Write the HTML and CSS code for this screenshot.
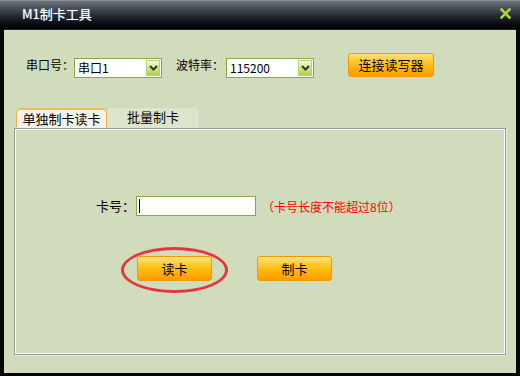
FILE: index.html
```html
<!DOCTYPE html>
<html lang="zh">
<head>
<meta charset="utf-8">
<title>M1制卡工具</title>
<link rel="stylesheet" href="styles.css">
</head>
<body>
<div class="window">
  <div class="titlebar">
    <span class="title">M1制卡工具</span>
    <svg class="close" width="11" height="11" viewBox="0 0 11 11"><path d="M1.5 1.5 L9.5 9.5 M9.5 1.5 L1.5 9.5" stroke="#a6d83a" stroke-width="2.6" stroke-linecap="square"/></svg>
  </div>
  <div class="content">
    <div class="toprow">
      <span class="lbl lbl1">串口号：</span>
      <div class="combo"><span class="combo-text">串口1</span><span class="arrow"><svg width="9" height="6" viewBox="0 0 9 6"><path d="M1 1 L4.5 4.5 L8 1" fill="none" stroke="#333" stroke-width="2"/></svg></span></div>
      <span class="lbl lbl2">波特率：</span>
      <div class="combo"><span class="combo-text">115200</span><span class="arrow"><svg width="9" height="6" viewBox="0 0 9 6"><path d="M1 1 L4.5 4.5 L8 1" fill="none" stroke="#333" stroke-width="2"/></svg></span></div>
      <button class="obtn connect">连接读写器</button>
    </div>
    <div class="tabs">
      <div class="tab active">单独制卡读卡</div>
      <div class="tab">批量制卡</div>
    </div>
    <div class="panel">
      <div class="cardrow">
        <span class="lbl lbl3">卡号：</span>
        <div class="input"><span class="caret"></span></div>
        <span class="hint">（卡号长度不能超过8位）</span>
      </div>
      <div class="btnrow">
        <div class="btnwrap">
          <button class="obtn small">读卡</button>
          <span class="ring"></span>
        </div>
        <button class="obtn small">制卡</button>
      </div>
    </div>
  </div>
</div>
</body>
</html>
```
FILE: styles.css
```css
html, body {
  margin: 0;
  padding: 0;
  background: #000;
}
body {
  font-family: "Noto Sans CJK SC", "Liberation Sans", sans-serif;
  font-size: 12px;
  color: #000;
}
.window {
  width: 520px;
  height: 376px;
  display: flex;
  flex-direction: column;
  background: #050608;
  box-sizing: border-box;
  overflow: hidden;
}
.titlebar {
  height: 29px;
  flex: none;
  display: flex;
  align-items: center;
  justify-content: space-between;
  padding: 0 9px 0 22px;
  box-sizing: border-box;
  border-top: 1px solid #8a9098;
  background: linear-gradient(#6c7279 0%, #4a5058 25%, #23282e 55%, #0a0d11 80%, #000 100%);
}
.title {
  color: #fff;
  font-size: 13px;
  line-height: 16px;
  margin-top: -2px;
  text-shadow: 0 0 1px #8cc0ff;
}
.close {
  display: block;
  margin-top: -3px;
}
.content {
  flex: 1;
  margin: 0 4px 3px 4px;
  background: #d0dcbc;
  padding: 23px 0 0 0;
  box-sizing: border-box;
  display: flex;
  flex-direction: column;
  border-top: 1px solid #1e2226;
}
.toprow {
  display: flex;
  align-items: center;
  height: 24px;
  padding-left: 22px;
}
.lbl {
  white-space: nowrap;
  line-height: 20px;
}
.lbl1 { width: 48px; }
.lbl2 { width: 50px; margin-left: 14px; }
.combo {
  width: 88px;
  height: 20px;
  box-sizing: border-box;
  border: 1px solid #88aa40;
  background: #fff;
  display: flex;
  align-items: center;
  justify-content: space-between;
  margin-top: 5px;
}
.combo-text {
  padding-left: 3px;
  line-height: 18px;
}
.arrow {
  width: 14px;
  height: 16px;
  margin-right: 1px;
  box-sizing: border-box;
  border: 1px solid #b8d080;
  background: linear-gradient(#f4fadc, #c8e678 60%, #a8d040);
  display: flex;
  align-items: center;
  justify-content: center;
}
.arrow svg { display: block; }
.obtn {
  font-family: "Noto Sans CJK SC", "Liberation Sans", sans-serif;
  font-size: 12px;
  color: #000;
  border: 1px solid #f09a00;
  border-radius: 3px;
  background: linear-gradient(#ffe27a 0%, #ffc21a 45%, #ffa800 80%, #ff9c00 100%);
  padding: 0;
  line-height: 20px;
  cursor: default;
}
.connect {
  width: 86px;
  height: 24px;
  margin-left: 34px;
  font-size: 13px;
}
.tabs {
  display: flex;
  margin-top: 31px;
  padding-left: 12px;
  height: 20px;
}
.tab {
  width: 92px;
  height: 20px;
  box-sizing: border-box;
  text-align: center;
  line-height: 18px;
  font-size: 13px;
  background: #dde6cc;
  border-radius: 5px 5px 0 0;
}
.tab.active {
  width: 91px;
  background: #f4f4ea;
  border: 1px solid #f0b050;
  border-bottom: none;
  border-top: 2px solid #f8b850;
}
.panel {
  width: 492px;
  height: 227px;
  margin-left: 10px;
  box-sizing: border-box;
  border: 1px solid #9a9c98;
  box-shadow: inset 1px 1px 0 #fff, inset -1px -1px 0 #fff, 1px 1px 0 #e4ead8;
  padding: 67px 0 0 0;
}
.cardrow {
  display: flex;
  align-items: center;
  height: 20px;
  padding-left: 81px;
}
.lbl3 { width: 40px; font-size: 13px; }
.input {
  width: 120px;
  height: 20px;
  box-sizing: border-box;
  border: 1px solid #88aa40;
  background: #fff;
  display: flex;
  align-items: center;
  padding-left: 2px;
}
.caret {
  width: 1px;
  height: 14px;
  background: #000;
}
.hint {
  margin-left: 6px;
  color: #ff0000;
  font-size: 12px;
  white-space: nowrap;
}
.btnrow {
  display: flex;
  margin-top: 40px;
  padding-left: 122px;
  gap: 45px;
}
.btnwrap {
  position: relative;
  display: flex;
}
.small {
  width: 75px;
  height: 25px;
  font-size: 13px;
}
.ring {
  position: absolute;
  left: -16px;
  top: -9px;
  width: 107px;
  height: 46px;
  box-sizing: border-box;
  border: 3px solid #e8343c;
  border-radius: 50%;
  pointer-events: none;
}
```
